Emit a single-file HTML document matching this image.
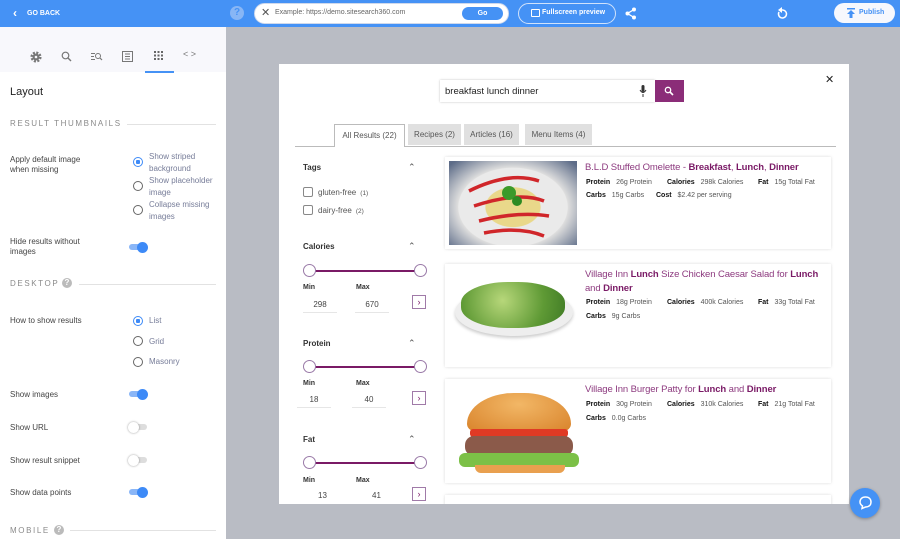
<!DOCTYPE html>
<html><head><meta charset="utf-8"><style>
*{box-sizing:border-box;margin:0;padding:0}
body{width:900px;height:539px;overflow:hidden;background:#b9bcc4;font-family:"Liberation Sans",sans-serif;position:relative;color:#333}
.a{position:absolute}
.top{left:0;top:0;width:900px;height:27px;background:#4592f5}
.side{left:0;top:27px;width:226px;height:512px;background:#fff}
.lbl{font-size:8px;color:#444}
.rad{width:10px;height:10px;border:1px solid #666;border-radius:50%;background:#fff}
.rad.on{border-color:#3d8af7}
.rad.on::after{content:"";position:absolute;left:2px;top:2px;width:4px;height:4px;background:#3d8af7;border-radius:1px}
.rt{font-size:8px;color:#777d99;line-height:12px}
.tg{width:18px;height:6px;border-radius:3px}
.tg.on{background:#8ab6f7}.tg.off{background:#ddd}
.kn{width:11px;height:11px;border-radius:50%;top:-2.5px}
.sec{font-size:8px;letter-spacing:1.6px;color:#8a8a8a}
.hr{height:1px;background:#e2e2e2}
.modal{left:279px;top:64px;width:570px;height:440px;background:#fff;overflow:hidden}
.card{left:166px;width:386px;background:#fff;box-shadow:0 0 3px rgba(0,0,0,.15)}
.tt{font-size:9.5px;color:#8d3a7f;line-height:14px;white-space:nowrap;letter-spacing:-0.1px}
.tt b{color:#7a1a66}
.dp{font-size:7px;color:#555}
.dp b{color:#111;margin-right:4px}
.fh{font-size:8px;font-weight:bold;color:#333}
.car{font-size:9px;color:#555}
.knob{width:13px;height:13px;border:1px solid #9a7aa8;border-radius:50%;background:#fff}
.line{height:1.5px;background:#7a1a66}
.mm{font-size:7px;font-weight:bold;color:#333}
.num{font-size:8px;color:#444;border-bottom:1px solid #e6e6e6;width:34px;text-align:center;padding-bottom:3px}
.go{width:14px;height:14px;border:1px solid #a07aa8;font-size:9px;color:#7a1a66;text-align:center;line-height:12px}
.tab{top:60px;height:21px;font-size:8px;color:#555;background:#e0e0e0;text-align:center;line-height:21px}
</style></head><body>
<div class="a top">
  <div class="a" style="left:13px;top:6px;color:#fff;font-size:12px;font-weight:bold">&#8249;</div>
  <div class="a" style="left:27px;top:10px;color:#fff;font-size:7px;font-weight:bold">GO BACK</div>
  <div class="a" style="left:230px;top:6px;width:14px;height:14px;border-radius:50%;background:#88b6f5;color:#4592f5;font-size:10px;font-weight:bold;text-align:center;line-height:14px">?</div>
  <div class="a" style="left:254px;top:3px;width:255px;height:21px;border-radius:11px;background:#fff;border:1px solid #cfd9ec"></div>
  <div class="a" style="left:261px;top:6px;font-size:11px;color:#555">&#10005;</div>
  <div class="a" style="left:275px;top:9px;font-size:7px;color:#666">Example: https://demo.sitesearch360.com</div>
  <div class="a" style="left:462px;top:7px;width:41px;height:13px;border-radius:7px;background:#4592f5;color:#fff;font-size:7px;font-weight:bold;text-align:center;line-height:13px">Go</div>
  <div class="a" style="left:518px;top:3px;width:98px;height:21px;border-radius:11px;border:1px solid #d0e2fb"></div>
  <div class="a" style="left:531px;top:9px;width:9px;height:8px;border:1.5px solid #fff;border-radius:1px"></div>
  <div class="a" style="left:542px;top:9px;font-size:7px;color:#fff;font-weight:bold">Fullscreen preview</div>
  <svg class="a" style="left:625px;top:7px" width="12" height="13"><circle cx="9" cy="2.5" r="2" fill="#fff"/><circle cx="2.5" cy="6.5" r="2" fill="#fff"/><circle cx="9" cy="10.5" r="2" fill="#fff"/><path d="M9 2.5L2.5 6.5L9 10.5" stroke="#fff" fill="none" stroke-width="1.3"/></svg>
  <svg class="a" style="left:776px;top:7px" width="12" height="13"><path d="M3 5A4 4 0 1 0 6 3" stroke="#fff" fill="none" stroke-width="1.5"/><path d="M6 0L6 6L2 3Z" fill="#fff"/></svg>
  <div class="a" style="left:834px;top:3px;width:61px;height:20px;border-radius:10px;background:#f6f8fd"></div>
  <svg class="a" style="left:847px;top:8px" width="9" height="10"><rect x="0" y="0" width="8" height="1.5" fill="#4592f5"/><path d="M4 2L8 6H5.5V10H2.5V6H0Z" fill="#4592f5"/></svg>
  <div class="a" style="left:859px;top:9px;font-size:7px;color:#4592f5;font-weight:bold">Publish</div>
</div>

<div class="a side">
  <div class="a" style="left:0;top:0;width:226px;height:45px;background:#f8f8fc"></div>
  <svg class="a" style="left:30px;top:24px" width="12" height="12"><circle cx="6" cy="6" r="4.3" fill="none" stroke="#777" stroke-width="2.5" stroke-dasharray="2 1.4"/><circle cx="6" cy="6" r="3.5" fill="#777"/><circle cx="6" cy="6" r="1.3" fill="#f8f8fc"/></svg>
  <svg class="a" style="left:61px;top:24px" width="11" height="11"><circle cx="4.5" cy="4.5" r="3.3" fill="none" stroke="#777" stroke-width="1.2"/><path d="M7 7L10 10" stroke="#777" stroke-width="1.4"/></svg>
  <svg class="a" style="left:91px;top:25px" width="12" height="9"><path d="M0 1.5H4M0 4.5H3M0 7.5H4" stroke="#777"/><circle cx="7" cy="4" r="2.5" fill="none" stroke="#777"/><path d="M9 6L11 8" stroke="#777" stroke-width="1.2"/></svg>
  <svg class="a" style="left:122px;top:24px" width="11" height="11"><rect x=".5" y=".5" width="10" height="10" fill="none" stroke="#777"/><path d="M3 3H8M3 5.5H8M3 8H8" stroke="#777"/></svg>
  <svg class="a" style="left:154px;top:24px" width="9" height="9" fill="#666"><rect x="0" y="0" width="2" height="2"/><rect x="3.5" y="0" width="2" height="2"/><rect x="7" y="0" width="2" height="2"/><rect x="0" y="3.5" width="2" height="2"/><rect x="3.5" y="3.5" width="2" height="2"/><rect x="7" y="3.5" width="2" height="2"/><rect x="0" y="7" width="2" height="2"/><rect x="3.5" y="7" width="2" height="2"/><rect x="7" y="7" width="2" height="2"/></svg>
  <div class="a" style="left:145px;top:44px;width:29px;height:2px;background:#4592f5"></div>
  <div class="a" style="left:183px;top:22px;font-size:9px;color:#777">&lt; &gt;</div>
  <div class="a" style="left:10px;top:59px;font-size:11px;color:#222">Layout</div>
  <div class="a sec" style="left:10px;top:92px">RESULT THUMBNAILS</div>
  <div class="a hr" style="left:127px;top:97px;width:89px"></div>
  <div class="a lbl" style="left:10px;top:128px;line-height:10px">Apply default image<br>when missing</div>
  <div class="a rad on" style="left:133px;top:130px"></div><div class="a rt" style="left:149px;top:124px">Show striped<br>background</div>
  <div class="a rad" style="left:133px;top:154px"></div><div class="a rt" style="left:149px;top:148px">Show placeholder<br>image</div>
  <div class="a rad" style="left:133px;top:178px"></div><div class="a rt" style="left:149px;top:172px">Collapse missing<br>images</div>
  <div class="a lbl" style="left:10px;top:210px;line-height:10px">Hide results without<br>images</div>
  <div class="a tg on" style="left:129px;top:217px"><div class="a kn" style="left:8px;background:#3d8af7"></div></div>
  <div class="a sec" style="left:10px;top:252px">DESKTOP</div>
  <div class="a" style="left:62px;top:251px;width:10px;height:10px;border-radius:50%;background:#bbb;color:#fff;font-size:8px;font-weight:bold;text-align:center;line-height:10px">?</div>
  <div class="a hr" style="left:79px;top:257px;width:137px"></div>
  <div class="a lbl" style="left:10px;top:289px">How to show results</div>
  <div class="a rad on" style="left:133px;top:289px"></div><div class="a rt" style="left:149px;top:288px">List</div>
  <div class="a rad" style="left:133px;top:309px"></div><div class="a rt" style="left:149px;top:309px">Grid</div>
  <div class="a rad" style="left:133px;top:330px"></div><div class="a rt" style="left:149px;top:329px">Masonry</div>
  <div class="a lbl" style="left:10px;top:363px">Show images</div>
  <div class="a tg on" style="left:129px;top:364px"><div class="a kn" style="left:8px;background:#3d8af7"></div></div>
  <div class="a lbl" style="left:10px;top:396px">Show URL</div>
  <div class="a tg off" style="left:129px;top:397px"><div class="a kn" style="left:-1px;background:#fff;box-shadow:0 0 2px rgba(0,0,0,.4)"></div></div>
  <div class="a lbl" style="left:10px;top:429px">Show result snippet</div>
  <div class="a tg off" style="left:129px;top:430px"><div class="a kn" style="left:-1px;background:#fff;box-shadow:0 0 2px rgba(0,0,0,.4)"></div></div>
  <div class="a lbl" style="left:10px;top:461px">Show data points</div>
  <div class="a tg on" style="left:129px;top:462px"><div class="a kn" style="left:8px;background:#3d8af7"></div></div>
  <div class="a sec" style="left:10px;top:499px">MOBILE</div>
  <div class="a" style="left:54px;top:498px;width:10px;height:10px;border-radius:50%;background:#bbb;color:#fff;font-size:8px;font-weight:bold;text-align:center;line-height:10px">?</div>
  <div class="a hr" style="left:70px;top:503px;width:146px"></div>
</div>

<div class="a modal">
  <div class="a" style="left:546px;top:9px;font-size:11px;color:#222">&#10005;</div>
  <div class="a" style="left:161px;top:16px;width:215px;height:22px;background:#fff;box-shadow:0 0 2px rgba(0,0,0,.25)"></div>
  <div class="a" style="left:166px;top:22px;font-size:9.5px;color:#222">breakfast lunch dinner</div>
  <svg class="a" style="left:360px;top:21px" width="8" height="12"><rect x="2.5" y="0" width="3" height="7" rx="1.5" fill="#333"/><path d="M1 5Q4 10 7 5M4 9V12" stroke="#333" fill="none"/></svg>
  <div class="a" style="left:376px;top:16px;width:29px;height:22px;background:#8b2d78"></div>
  <svg class="a" style="left:385px;top:22px" width="10" height="10"><circle cx="4" cy="4" r="2.7" fill="none" stroke="#fff" stroke-width="1.3"/><path d="M6 6L9 9" stroke="#fff" stroke-width="1.6"/></svg>
  <div class="a" style="left:16px;top:82px;width:541px;height:1px;background:#bbb"></div>
  <div class="a tab" style="left:55px;width:71px;height:23px;background:#fff;border:1px solid #bbb;border-bottom:none;line-height:21px">All Results (22)</div>
  <div class="a tab" style="left:129px;width:53px">Recipes (2)</div>
  <div class="a tab" style="left:185px;width:55px">Articles (16)</div>
  <div class="a tab" style="left:246px;width:67px">Menu Items (4)</div>

  <div class="a fh" style="left:24px;top:99px">Tags</div><div class="a car" style="left:129px;top:98px">&#8963;</div>
  <div class="a" style="left:24px;top:123px;width:10px;height:10px;border:1px solid #888;border-radius:2px"></div>
  <div class="a" style="left:39px;top:124px;font-size:8px;color:#555">gluten-free <span style="font-size:6.5px">&nbsp;(1)</span></div>
  <div class="a" style="left:24px;top:141px;width:10px;height:10px;border:1px solid #888;border-radius:2px"></div>
  <div class="a" style="left:39px;top:142px;font-size:8px;color:#555">dairy-free <span style="font-size:6.5px">&nbsp;(2)</span></div>

  <div class="a fh" style="left:24px;top:178px">Calories</div><div class="a car" style="left:129px;top:177px">&#8963;</div>
  <div class="a line" style="left:30px;top:206px;width:112px"></div>
  <div class="a knob" style="left:24px;top:200px"></div><div class="a knob" style="left:135px;top:200px"></div>
  <div class="a mm" style="left:24px;top:220px">Min</div><div class="a mm" style="left:77px;top:220px">Max</div>
  <div class="a num" style="left:24px;top:236px">298</div><div class="a num" style="left:76px;top:236px">670</div>
  <div class="a go" style="left:133px;top:231px">&#8250;</div>

  <div class="a fh" style="left:24px;top:275px">Protein</div><div class="a car" style="left:129px;top:274px">&#8963;</div>
  <div class="a line" style="left:30px;top:302px;width:112px"></div>
  <div class="a knob" style="left:24px;top:296px"></div><div class="a knob" style="left:135px;top:296px"></div>
  <div class="a mm" style="left:24px;top:316px">Min</div><div class="a mm" style="left:77px;top:316px">Max</div>
  <div class="a num" style="left:18px;top:331px">18</div><div class="a num" style="left:73px;top:331px">40</div>
  <div class="a go" style="left:133px;top:327px">&#8250;</div>

  <div class="a fh" style="left:24px;top:371px">Fat</div><div class="a car" style="left:129px;top:370px">&#8963;</div>
  <div class="a line" style="left:30px;top:398px;width:112px"></div>
  <div class="a knob" style="left:24px;top:392px"></div><div class="a knob" style="left:135px;top:392px"></div>
  <div class="a mm" style="left:24px;top:413px">Min</div><div class="a mm" style="left:77px;top:413px">Max</div>
  <div class="a" style="left:39px;top:427px;font-size:8px;color:#444">13</div><div class="a" style="left:93px;top:427px;font-size:8px;color:#444">41</div>
  <div class="a go" style="left:133px;top:423px">&#8250;</div>

  <div class="a card" style="top:93px;height:92px">
    <div class="a" style="left:4px;top:4px;width:128px;height:84px;background:radial-gradient(ellipse at 50% 55%,#e9d88a 0 30%,#eaeaea 31% 60%,#ddd 61%,#5d6c88 95%);overflow:hidden">
      <svg width="128" height="84" class="a" style="left:0;top:0"><path d="M20 30Q60 10 90 20M25 45Q70 30 95 40M30 60Q70 50 100 55M35 72Q70 65 95 75" stroke="#d0262a" stroke-width="3.5" fill="none"/><circle cx="60" cy="32" r="7" fill="#3b9a2a"/><circle cx="68" cy="40" r="5" fill="#2d8a22"/></svg>
    </div>
    <div class="a tt" style="left:140px;top:4px">B.L.D Stuffed Omelette - <b>Breakfast</b>, <b>Lunch</b>, <b>Dinner</b></div>
    <div class="a dp" style="left:141px;top:22px"><b>Protein</b> 26g Protein</div>
    <div class="a dp" style="left:222px;top:22px"><b>Calories</b> 298k Calories</div>
    <div class="a dp" style="left:313px;top:22px"><b>Fat</b> 15g Total Fat</div>
    <div class="a dp" style="left:141px;top:35px"><b>Carbs</b> 15g Carbs</div>
    <div class="a dp" style="left:211px;top:35px"><b>Cost</b> $2.42 per serving</div>
  </div>
  <div class="a card" style="top:200px;height:103px">
    <div class="a" style="left:10px;top:24px;width:118px;height:48px;border-radius:50%;background:#eee;box-shadow:0 2px 3px #ccc"></div>
    <div class="a" style="left:16px;top:18px;width:104px;height:46px;border-radius:45%;background:radial-gradient(circle at 40% 40%,#b7d77a,#5f9a35 60%,#3f7a25)"></div>
    <div class="a tt" style="left:140px;top:4px">Village Inn <b>Lunch</b> Size Chicken Caesar Salad for <b>Lunch</b><br>and <b>Dinner</b></div>
    <div class="a dp" style="left:141px;top:35px"><b>Protein</b> 18g Protein</div>
    <div class="a dp" style="left:222px;top:35px"><b>Calories</b> 400k Calories</div>
    <div class="a dp" style="left:313px;top:35px"><b>Fat</b> 33g Total Fat</div>
    <div class="a dp" style="left:141px;top:49px"><b>Carbs</b> 9g Carbs</div>
  </div>
  <div class="a card" style="top:315px;height:104px">
    <div class="a" style="left:22px;top:14px;width:104px;height:38px;border-radius:50% 50% 8px 8px/90% 90% 8px 8px;background:radial-gradient(ellipse at 50% 30%,#f2b766,#d9842c)"></div>
    <div class="a" style="left:25px;top:50px;width:98px;height:8px;background:#e03a24;border-radius:3px"></div>
    <div class="a" style="left:20px;top:57px;width:108px;height:20px;background:#8b5a4a;border-radius:9px"></div>
    <div class="a" style="left:14px;top:74px;width:120px;height:14px;background:#7cc047;border-radius:6px"></div>
    <div class="a" style="left:30px;top:86px;width:90px;height:8px;background:#e9a04f;border-radius:0 0 6px 6px"></div>
    <div class="a tt" style="left:140px;top:4px">Village Inn Burger Patty for <b>Lunch</b> and <b>Dinner</b></div>
    <div class="a dp" style="left:141px;top:22px"><b>Protein</b> 30g Protein</div>
    <div class="a dp" style="left:222px;top:22px"><b>Calories</b> 310k Calories</div>
    <div class="a dp" style="left:313px;top:22px"><b>Fat</b> 21g Total Fat</div>
    <div class="a dp" style="left:141px;top:36px"><b>Carbs</b> 0.0g Carbs</div>
  </div>
  <div class="a card" style="top:431px;height:20px"></div>
</div>
<div class="a" style="left:850px;top:488px;width:30px;height:30px;border-radius:50%;background:#4592f5;box-shadow:0 1px 3px rgba(0,0,0,.3)"></div>
<svg class="a" style="left:858px;top:495px" width="15" height="15"><path d="M7.5 2C11 2 13 4 13 7C13 10 11 12 7.5 12L4 13.5L4.5 11C3 10 2 8.7 2 7C2 4 4 2 7.5 2Z" fill="none" stroke="#fff" stroke-width="1.5"/></svg>
</body></html>
